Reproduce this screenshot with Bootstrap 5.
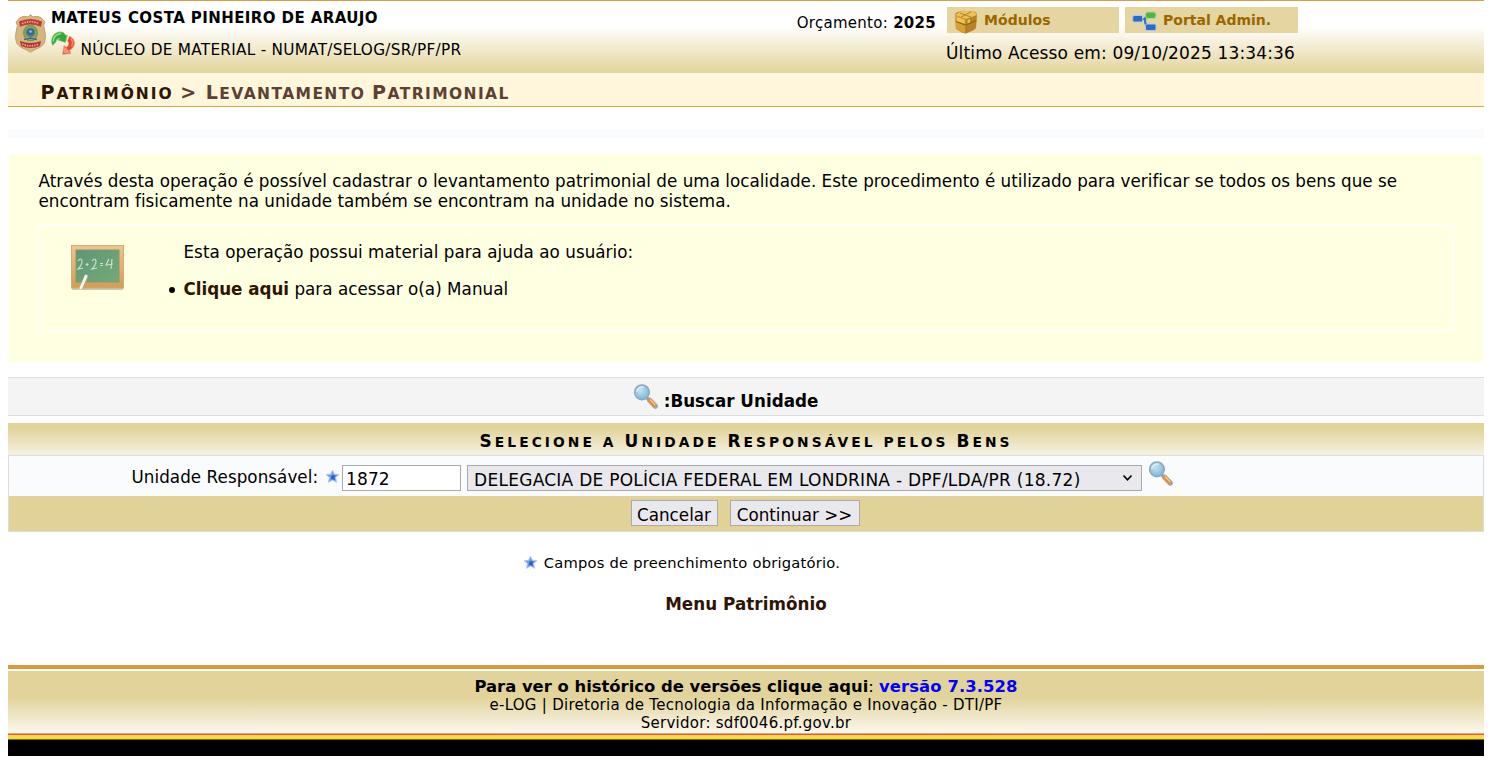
<!DOCTYPE html>
<html lang="pt-BR">
<head>
<meta charset="utf-8">
<title>e-LOG - Levantamento Patrimonial</title>
<link rel="stylesheet" href="https://cdn.jsdelivr.net/npm/bootstrap@5.3.0/dist/css/bootstrap.min.css">
<style>
body{font:16.75px/20px "DejaVu Sans",sans-serif;letter-spacing:.05px;color:#000;background:#fff;padding:0 9px 0 8px;overflow:hidden;white-space:nowrap}
svg{display:block;flex:none}
a{text-decoration:none;color:#2e1503;font-weight:bold}
a:hover{text-decoration:underline}
.topo{height:73px;border-top:1px solid #d99f45;background:linear-gradient(#fff 0,#fff 34%,#e3d49b 100%)}
.brasao{margin:13px 0 0 7px}
.ident{margin-left:5px;padding-top:7px}
.nome{font-size:15px;font-weight:bold;letter-spacing:.41px;height:23px}
.lotacao{font-size:15.3px;letter-spacing:.26px}
.lotacao span{margin:9px 0 0 5.5px}
.conta{margin-right:186px;padding-top:6px}
.orcamento{font-size:15px;letter-spacing:.28px;margin:6px 11px 0 0}
.atalho{height:26px;width:172px;background:#e5d5a0;color:#960;font-size:14px;letter-spacing:.05px;padding-top:3px}
.atalho:hover{color:#960}
.atalho.admin{width:173px;letter-spacing:0;margin-left:6px}
.acesso{font-size:17px;letter-spacing:.15px;margin:10px 0 0 -1px}
.versalete{text-transform:uppercase;font-size:15.5px;font-weight:bold}
.versalete i{font-style:normal;font-size:1.23em}
.titulo{height:34px;background:#fff6db;border-bottom:1px solid #c9b03a;padding:9px 0 0 32.500px;letter-spacing:1.4px;color:#5c4033}
.titulo a{letter-spacing:1.95px}
.faixa{height:9px;margin-top:22px;background:#fafbfd}
.descricao{height:208px;margin:16px 1px 0;background:#ffffe2;padding:17px 29px 0 29.500px;letter-spacing:.015px}
.ajuda{height:108px;margin:13px 0 0 -.5px;border:2px solid #fffff8;letter-spacing:.04px}
.lousa{margin:18px 0 0 29.500px}
.ajuda-texto{margin:16px 0 0 44px}
.ajuda-texto a{letter-spacing:-.03px}
.ponto{width:6px;height:6px;border-radius:50%;background:#000;margin:2px 9px 0 0}
.legenda{height:39px;margin-top:15px;background:#f4f4f4;border:solid #ddd;border-width:1px 0;font-weight:bold;gap:6px;padding-right:41px;letter-spacing:0}
.quadro-titulo{height:32px;margin-top:7px;padding-top:8px;background:linear-gradient(#e1d39a 0,#e1d39a 15%,#f7f2e2 100%);letter-spacing:3.080px}
.quadro-titulo.versalete{font-size:13.800px}
.quadro{border:1px solid #ddd}
.linha{height:40px;background:#fafbfd}
.rotulo{margin:11px 0 0 122.500px}
.acoes{height:35px;background:#e1d298;gap:12px;padding:4px 2px 0 0}
.campo,.escolha,.botao{height:26px;border:1px solid #aaa;border-radius:0;color:#000;font:inherit;line-height:20px;margin-top:9px}
.campo{width:119px;padding:3px 3px 1px;background:#fff;letter-spacing:.1px;font-size:17px}
.escolha{width:675px;padding:4px 0 0 6px;margin-left:6px;appearance:none;font-size:17px;letter-spacing:.26px;background:#e9e9ed url("data:image/svg+xml,%3Csvg xmlns='http://www.w3.org/2000/svg' viewBox='0 0 11 8'%3E%3Cpath d='M1.5 1.5 5.5 5.8 9.5 1.5' fill='none' stroke='%23000' stroke-width='1.7'/%3E%3C/svg%3E") no-repeat right 8px center/11px 8px}
.botao{background:#e9e9ed;padding:4px 0 0;margin:0;width:87px;letter-spacing:0}
.botao.largo{width:130px}
.aviso{font-size:14.7px;letter-spacing:.23px;margin-top:21px;padding-right:128px;gap:7px}
.rodape{margin-top:51px;border-top:4px solid #d99b42}
.rodape-texto{height:62px;margin-top:2px;padding-top:7px;background:linear-gradient(#e1d39a 0,#e1d39a 42%,#fbf8ee 100%);font-size:15px;letter-spacing:.27px;line-height:18px}
.versao{font-size:16.4px;letter-spacing:0;height:18px}
.versao a{color:#00f;letter-spacing:.1px}
.bandeira{height:23px;background:linear-gradient(#f0a08c 0 1px,#e8583c 1px 2px,#f6dc40 2px 6px,#7a6a10 6px 7px,#000 7px)}
</style>
<script src="https://cdn.jsdelivr.net/npm/bootstrap@5.3.0/dist/js/bootstrap.bundle.min.js"></script>
</head>
<body>
<svg width="0" height="0" class="position-absolute">
<defs>
<radialGradient id="lente" cx=".4" cy=".35" r=".7"><stop offset="0" stop-color="#c4e4f2"/><stop offset="1" stop-color="#77b4d8"/></radialGradient>
<linearGradient id="azul" x2="0" y2="1"><stop offset="0" stop-color="#8db9f5"/><stop offset="1" stop-color="#2c5fc4"/></linearGradient>
<linearGradient id="madeira" x2="0" y2="1"><stop offset="0" stop-color="#efc591"/><stop offset="1" stop-color="#d39c56"/></linearGradient>
<linearGradient id="quadroverde" x2="1" y2="1"><stop offset="0" stop-color="#5e9676"/><stop offset="1" stop-color="#74aa78"/></linearGradient>
<symbol id="lupa" viewBox="0 0 24 24"><path d="M13.5 13.5 16.500 16.500" stroke="#8d8d8d" stroke-width="3"/><path d="M16 15.600 21.400 21.200" stroke="#a9a39d" stroke-width="5" stroke-linecap="round"/><path d="M15.500 15.100 21 20.700" stroke="#f08a32" stroke-width="3.600"/><path d="M16.500 15 21.300 20" stroke="#ffd08c" stroke-width="1.200"/><circle cx="8.600" cy="8" r="7" fill="url(#lente)" stroke="#8da9b8" stroke-width="1.500"/><path d="M3.500 7.500a5.500 5.500 0 0 1 7-4.400" fill="none" stroke="#fff" stroke-opacity=".6" stroke-width="1.500"/></symbol>
<symbol id="estrela" viewBox="0 0 12 12"><path d="M6 .3 7.700 3.900 11.800 4.300 8.800 7 9.700 11.300 6 9.200 2.300 11.300 3.200 7 .2 4.300 4.300 3.900Z" fill="#6d9cec" stroke="#a9c7f5" stroke-width=".9"/><path d="M6 4.500 9 5.200 7.700 6.800 8.400 9.400 6 8.200 4.500 8.800 4.800 6.500Z" fill="#2c5cc6"/></symbol>
</defs>
</svg>
<header class="topo d-flex align-items-start">
<svg class="brasao" width="31" height="39" viewBox="0 0 31 39">
<path d="M15.5.7 18 3 22 2.300 26 3.600 30 8Q27.500 11 29.500 16 31.500 24 29 29.500 26 34 20 35.500L15.500 38.300 11 35.500Q5 34 2 29.500-.5 24 1.500 16 3.500 11 1 8L5 3.600 9 2.300 13 3Z" fill="#d7b67c" stroke="#bda074" stroke-width="1"/>
<path d="M4 7.500Q15.500 2.500 27 7.500L26 12.700Q15.500 8.500 5 12.700Z" fill="#c13b34"/>
<path d="M5 27Q15.500 31 26 27L25 32Q15.500 36 6 32Z" fill="#b9332f"/>
<path d="M7 9.700Q15.500 5.700 24 9.700M7 30Q15.500 33.800 24 30" fill="none" stroke="#e5a596" stroke-width="1.700" stroke-dasharray="1.500 1"/>
<ellipse cx="15.500" cy="19" rx="6.500" ry="7.500" fill="#c9a545" stroke="#6f9d62" stroke-width="2"/>
<circle cx="15.500" cy="18.500" r="5" fill="#4c9360"/><circle cx="15.500" cy="18" r="3.600" fill="#3266b0"/><circle cx="15.500" cy="17.500" r="1.200" fill="#9fc3df"/>
<path d="M9 25.500 15.500 24 22 25.500" fill="none" stroke="#4167a0" stroke-width="1.400"/>
</svg>
<div class="ident">
<div class="nome">MATEUS COSTA PINHEIRO DE ARAUJO</div>
<div class="lotacao d-flex">
<svg width="24" height="24" viewBox="0 0 24 24"><path d="M1.500 14.500Q-1 8 3 3.500 7-.5 12.500 1.500L15 4.500 16.500 4 14.500 11.500 6.500 9 9 7.500Q5.500 7 5 11Z" fill="#36a83b" stroke="#8acb83" stroke-width=".6"/><path d="M2.300 10.500Q2.500 3.500 10 2.500" fill="none" stroke="#9be08e" stroke-width="1.500"/><path d="M18.500 5Q24 8 23.500 13 22.500 17.500 18.500 19.300L20 22.500 11.500 23.500 13 14.500 15.500 16.300Q19 14 16.500 9.500Z" fill="#e5472c" stroke="#f0a28d" stroke-width=".6"/><path d="M19.700 7.500Q22.800 11 20.500 15.500" fill="none" stroke="#ff8e6d" stroke-width="1.300"/><path d="M13 15.500 15.500 17.300 17.500 19.500 19 21.800 12.500 22.500Z" fill="#ef9478"/></svg>
<span>NÚCLEO DE MATERIAL - NUMAT/SELOG/SR/PF/PR</span>
</div>
</div>
<div class="conta ms-auto d-flex align-items-start">
<div class="orcamento">Orçamento: <b>2025</b></div>
<div>
<div class="d-flex">
<a class="atalho d-flex" href="#"><svg width="24" height="24" viewBox="0 0 24 24" style="margin:0 6px 0 7px"><path d="M1 5Q1 3 4 2L9 .8 20 1.500Q23 2.500 23 5L22 18Q21 20 12 23.500 10 24 2 19Z" fill="#b98222"/><path d="M1 5 8 .8 20 1.500 23 5 12 9Z" fill="#ebc15b"/><path d="M1 5 12 9 11 23.500 2 18.500Z" fill="#d9a034"/><path d="M2 11.500 11.500 15 22.500 10.500" fill="none" stroke="#8b651b" stroke-width="1.300"/><path d="M12 9V23M6 3 17 7M17 2 7 7" fill="none" stroke="#a67822" stroke-width=".8"/><path d="M3 7.300 10.500 10V13.500L3 11ZM13.500 10 16 9V12.500L13.500 13.500Z" fill="#f4cf68" fill-opacity=".8"/></svg>Módulos</a>
<a class="atalho admin d-flex" href="#"><svg width="25" height="22" viewBox="0 0 25 22" style="margin:0 6px 0 7px"><path d="M10 9H14M17 6Q13 6 13 10 13 16 17 17" fill="none" stroke="#3a70c0" stroke-width="2.200"/><rect x=".7" y="5.500" width="10" height="6.500" rx="1.500" fill="#2c69cc" stroke="#a8c9f6"/><rect x="13.500" y="2" width="10.500" height="6.500" rx="2.500" fill="#54b443" stroke="#a6dc96"/><rect x="13.500" y="14" width="10.500" height="6.500" rx="1.500" fill="#2c69cc" stroke="#a8c9f6"/></svg>Portal Admin.</a>
</div>
<div class="acesso">Último Acesso em: 09/10/2025 13:34:36</div>
</div>
</div>
</header>
<nav class="titulo versalete"><a href="#"><i>P</i>atrimônio</a> <i>&gt; L</i>evantamento <i>P</i>atrimonial</nav>
<main>
<div class="faixa"></div>
<section class="descricao">
Através desta operação é possível cadastrar o levantamento patrimonial de uma localidade. Este procedimento é utilizado para verificar se todos os bens que se<br>encontram fisicamente na unidade também se encontram na unidade no sistema.
<div class="ajuda d-flex align-items-start">
<svg class="lousa" width="55" height="47" viewBox="0 0 55 47"><path d="M2 44H53V46H2Z" fill="#9c8b68" fill-opacity=".45"/><rect x="1.500" y="1.500" width="52" height="42.500" fill="url(#madeira)" stroke="#d3ab78"/><rect x="6" y="6" width="43" height="32" fill="url(#quadroverde)" stroke="#8b9868"/><path d="M8 17Q11 13 12 17 12 21 8 25L13 24M22 17Q25 13 26 17 26 21 22 25L27 24M39 15 36 21 43 20M42 15 41 25M15.500 20.500H18.500M17 19V22M30 19.500H33M30 21.500H33" fill="none" stroke="#c9dfcb" stroke-width="1.200"/><path d="M16.500 32 11 45" stroke="#bba889" stroke-width="4"/><path d="M16.500 31 10.500 45" stroke="#f6f4ef" stroke-width="2.700"/></svg>
<div class="ajuda-texto">
<div style="padding-left:15px">Esta operação possui material para ajuda ao usuário:</div>
<div class="d-flex align-items-center mt-3"><span class="ponto"></span><span style="padding-top:1px"><a href="#">Clique aqui</a> para acessar o(a) Manual</span></div>
</div>
</div>
</section>
<div class="legenda d-flex justify-content-center"><svg width="25" height="25" style="margin-top:6px"><use href="#lupa"/></svg><span style="margin-top:13px">:Buscar Unidade</span></div>
<form>
<div class="quadro-titulo versalete text-center"><i>S</i>elecione a <i>U</i>nidade <i>R</i>esponsável pelos <i>B</i>ens</div>
<div class="quadro">
<div class="linha d-flex align-items-start">
<label class="rotulo" for="unidade">Unidade Responsável:</label>
<svg width="13" height="13" style="margin:14px 3px 0 8px"><use href="#estrela"/></svg>
<input class="campo" id="unidade" value="1872">
<select class="escolha" aria-label="Unidade"><option>DELEGACIA DE POLÍCIA FEDERAL EM LONDRINA - DPF/LDA/PR (18.72)</option></select>
<svg width="25" height="25" style="margin:5px 0 0 6px"><use href="#lupa"/></svg>
</div>
<div class="acoes d-flex justify-content-center"><button class="botao" type="button">Cancelar</button><button class="botao largo" type="button">Continuar &gt;&gt;</button></div>
</div>
</form>
<div class="aviso d-flex justify-content-center"><svg width="13" height="13" style="margin-top:3px"><use href="#estrela"/></svg>Campos de preenchimento obrigatório.</div>
<div class="text-center" style="margin-top:21px"><a href="#">Menu Patrimônio</a></div>
</main>
<footer class="rodape">
<div class="rodape-texto text-center"><div class="versao"><b>Para ver o histórico de versões clique aqui</b>: <a href="#">versão 7.3.528</a></div>e-LOG | Diretoria de Tecnologia da Informação e Inovação - DTI/PF<br>Servidor: sdf0046.pf.gov.br</div>
<div class="bandeira"></div>
</footer>
</body>
</html>
